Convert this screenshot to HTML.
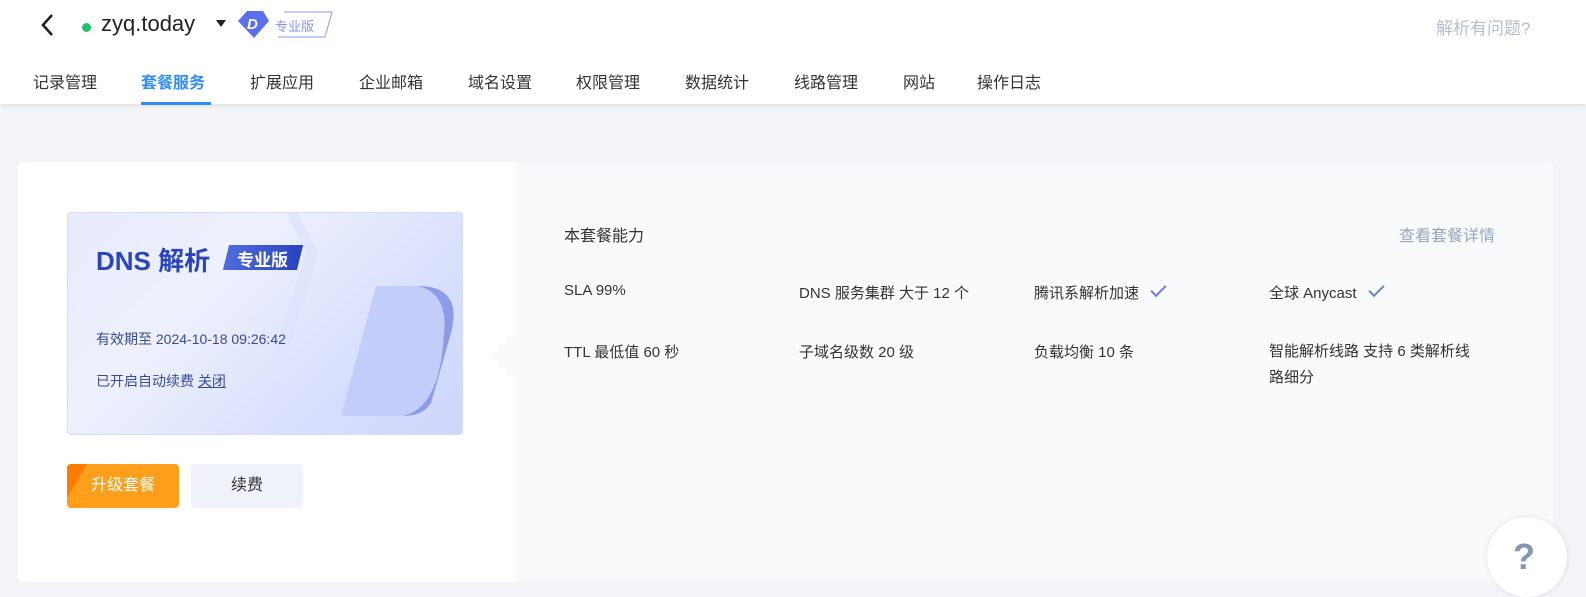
<!DOCTYPE html>
<html><head><meta charset="utf-8"><style>
*{margin:0;padding:0;box-sizing:border-box}
body{width:1586px;height:566px;overflow:hidden;background:#f2f4f8;font-family:"Liberation Sans","Noto Sans CJK SC",sans-serif;position:relative;color:#333}
.hdr{position:absolute;left:0;top:0;width:1586px;height:104px;background:#fff;box-shadow:0 2px 4px rgba(0,0,0,.08)}
.abs{position:absolute;white-space:nowrap}
.nav span{position:absolute;top:69px;font-size:16px;color:#333}
.card{position:absolute;left:18px;top:162px;width:1535px;height:420px;background:#fff;border-radius:6px;overflow:hidden}
.right{position:absolute;left:497px;top:0;right:0;bottom:0;background:#f9fafc}
.f{position:absolute;font-size:15px;color:#333;white-space:nowrap}
.chk{display:inline-block;width:15px;height:8px;border-left:2px solid #6b7fe0;border-bottom:2px solid #6b7fe0;transform:rotate(-45deg);margin-left:12px;vertical-align:5px}
</style></head><body>
<div class="hdr">
<svg class="abs" style="left:38px;top:12px" width="18" height="26"><path d="M14 3 L5 13 L14 23" stroke="#222" stroke-width="2.6" fill="none"/></svg>
<div class="abs" style="left:82px;top:23px;width:9px;height:9px;border-radius:50%;background:#1fc26b"></div>
<div class="abs" style="left:101px;top:11px;font-size:22px;color:#222">zyq.today</div>
<div class="abs" style="left:216px;top:20px;width:0;height:0;border-left:5px solid transparent;border-right:5px solid transparent;border-top:7px solid #222"></div>
<svg class="abs" style="left:236px;top:8px" width="100" height="32"><path d="M48 4 H96 L89 29 H42" fill="#fff" stroke="#8e9af0" stroke-width="1"/><path d="M2 13 L11 3 H27 L33 13 L18 30 Z" fill="#5b6ef0"/><text x="11" y="21" font-size="15" font-style="italic" font-weight="bold" fill="#fff" font-family="Liberation Sans">D</text><text x="39" y="23" font-size="13" fill="#8a92ee" font-family="Noto Sans CJK SC">专业版</text></svg>
<div class="abs" style="left:1436px;top:14px;font-size:17px;color:#b5bfd0">解析有问题?</div>
<div class="nav">
<span style="left:33px">记录管理</span>
<span style="left:141px;color:#2f8cf5;font-weight:bold">套餐服务</span>
<span style="left:250px">扩展应用</span>
<span style="left:359px">企业邮箱</span>
<span style="left:468px">域名设置</span>
<span style="left:576px">权限管理</span>
<span style="left:685px">数据统计</span>
<span style="left:794px">线路管理</span>
<span style="left:903px">网站</span>
<span style="left:977px">操作日志</span>
</div>
<div class="abs" style="left:141px;top:102px;width:70px;height:3px;background:#2f8cf5"></div>
</div>
<div class="card">
<div class="right"></div>
<div class="abs" style="left:472px;top:168px;width:0;height:0;border-top:26px solid transparent;border-bottom:26px solid transparent;border-right:26px solid #f9fafc"></div>
<div class="abs" style="left:49px;top:50px;width:396px;height:223px;border-radius:4px;border:1px solid #d4dcfa;background:linear-gradient(135deg,#e8ebfb 0%,#eef0fd 35%,#d9e0fd 70%,#cdd6fc 100%);overflow:hidden">
<svg class="abs" style="left:0;top:0" width="396" height="223"><path d="M230 0 L250 40 L195 223 H180 L238 40 L218 0Z" fill="#dde3fd" opacity=".7"/><path d="M308 73 H350 Q395 73 383 120 L363 190 Q355 203 335 203 H273 Z" fill="#c3cdf9"/><path d="M350 73 Q395 73 383 120 L363 190 Q355 203 335 203 Q372 195 376 120 Q380 80 350 73Z" fill="#8d9ce8"/></svg>
<div class="abs" style="left:28px;top:28px;font-size:26px;font-weight:bold;color:#2a44c0">DNS 解析</div>
<div class="abs" style="left:158px;top:32px;width:74px;height:25px;background:linear-gradient(90deg,#4d6cdb,#2a44c0);transform:skewX(-14deg)"></div>
<div class="abs" style="left:169px;top:33px;font-size:17px;font-weight:bold;color:#fff">专业版</div>
<div class="abs" style="left:28px;top:116px;font-size:14px;color:#3a4a9a">有效期至 2024-10-18 09:26:42</div>
<div class="abs" style="left:28px;top:158px;font-size:14px;color:#3a4a9a">已开启自动续费 <u>关闭</u></div>
</div>
<div class="abs" style="left:49px;top:302px;width:112px;height:44px;border-radius:4px;background:linear-gradient(120deg,#ff7a00 0,#ff7a00 14%,#ff9f1c 15%);color:#fff;font-size:16px;line-height:44px;text-align:center">升级套餐</div>
<div class="abs" style="left:173px;top:302px;width:112px;height:44px;border-radius:4px;background:#eff2f9;color:#333;font-size:16px;line-height:44px;text-align:center">续费</div>
<div class="f" style="left:546px;top:60px;font-size:16px">本套餐能力</div>
<div class="f" style="left:1381px;top:60px;font-size:16px;color:#98a6bd">查看套餐详情</div>
<div class="f" style="left:546px;top:120px">SLA 99%</div>
<div class="f" style="left:781px;top:120px">DNS 服务集群 大于 12 个</div>
<div class="f" style="left:1016px;top:120px">腾讯系解析加速<span class="chk"></span></div>
<div class="f" style="left:1251px;top:120px">全球 Anycast<span class="chk"></span></div>
<div class="f" style="left:546px;top:179px">TTL 最低值 60 秒</div>
<div class="f" style="left:781px;top:179px">子域名级数 20 级</div>
<div class="f" style="left:1016px;top:179px">负载均衡 10 条</div>
<div class="f" style="left:1251px;top:177px;line-height:26px">智能解析线路 支持 6 类解析线<br>路细分</div>
</div>
<div class="abs" style="left:1487px;top:517px;width:80px;height:80px;border-radius:50%;background:#fff;box-shadow:0 0 6px rgba(0,0,0,.1)"></div>
<div class="abs" style="left:1513px;top:536px;font-size:36px;font-weight:bold;color:#8796b0">?</div>
</body></html>
